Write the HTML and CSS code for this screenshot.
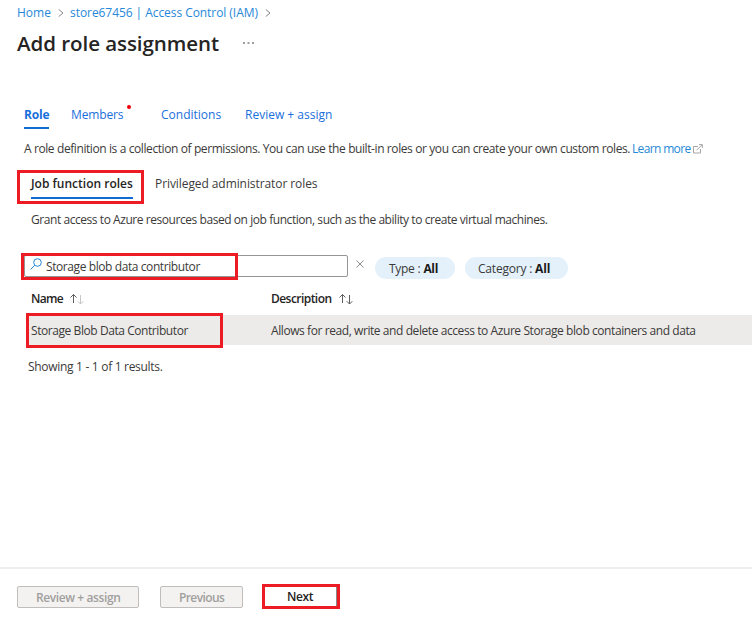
FILE: index.html
```html
<!DOCTYPE html>
<html lang="en">
<head>
<meta charset="utf-8">
<title>Add role assignment</title>
<link rel="stylesheet" href="styles.css">
</head>
<body>
<div class="page">
  <nav class="breadcrumb">
    <a class="crumb-home">Home</a>
    <svg class="chevron" viewBox="0 0 6 8"><path d="M.7.4 5 4 .7 7.6"/></svg>
    <a class="crumb-store">store67456 | Access Control (IAM)</a>
    <svg class="chevron" viewBox="0 0 6 8"><path d="M.7.4 5 4 .7 7.6"/></svg>
  </nav>
  <header class="title-row">
    <h1>Add role assignment</h1>
    <svg class="more" viewBox="0 0 11 2"><path d="M0 0h2v2H0zM4.5 0h2v2h-2zM9 0h2v2H9z"/></svg>
  </header>
  <nav class="tabs">
    <a class="tab tab-role active">Role</a>
    <a class="tab tab-members">Members<i class="dot"></i></a>
    <a class="tab tab-conditions">Conditions</a>
    <a class="tab tab-review">Review + assign</a>
  </nav>
  <p class="intro"><span class="intro-text">A role definition is a collection of permissions. You can use the built-in roles or you can create your own custom roles.</span><a class="learn">Learn more</a><svg class="external" viewBox="0 0 10 10"><path d="M5 2.500H.5v6.500H7.500V5M3.500 6.300 9 .8M6 .6h3.300V4"/></svg></p>
  <div class="subtabs">
    <div class="subtab-cell"><a class="subtab selected">Job function roles</a></div>
    <a class="subtab privileged">Privileged administrator roles</a>
  </div>
  <p class="grant"><span>Grant access to Azure resources based on job function, such as the ability to create virtual machines.</span></p>
  <div class="filters">
    <div class="search">
      <svg class="lens" viewBox="0 0 12 12"><circle cx="7.500" cy="4.500" r="3.800"/><path d="M4.800 7.200.6 11.400"/></svg>
      <span class="search-text">Storage blob data contributor</span>
      <i class="search-mark"></i>
    </div>
    <svg class="clear" viewBox="0 0 8 8"><path d="M.5.5l7 7M7.500.5l-7 7"/></svg>
    <div class="pill type"><span>Type : <b>All</b></span></div>
    <div class="pill category"><span>Category : <b>All</b></span></div>
  </div>
  <div class="table">
    <div class="thead">
      <div class="col-name"><b class="th-name">Name</b><svg class="sort" viewBox="0 0 16 12"><path d="M4.500 10V1.500M1.500 4.500l3-3 3 3"/><path class="faint" d="M11.500 2v9M8.700 8.200l2.800 2.800 2.800-2.800"/></svg></div>
      <div class="col-desc"><b class="th-desc">Description</b><svg class="sort" viewBox="0 0 16 12"><path d="M4.500 10V1.500M1.500 4.500l3-3 3 3"/><path d="M11.500 2v9M8.700 8.200l2.800 2.800 2.800-2.800"/></svg></div>
    </div>
    <div class="trow">
      <div class="col-name"><span class="td-name">Storage Blob Data Contributor</span><i class="row-mark"></i></div>
      <div class="col-desc"><span class="td-desc">Allows for read, write and delete access to Azure Storage blob containers and data</span></div>
    </div>
  </div>
  <p class="results"><span>Showing 1 - 1 of 1 results.</span></p>
  <footer class="footer">
    <div class="btn review"><span>Review + assign</span></div>
    <div class="btn previous"><span>Previous</span></div>
    <div class="next"><span>Next</span></div>
  </footer>
</div>
</body>
</html>
```
FILE: styles.css
```css
* { box-sizing: border-box; }
body { margin: 0; background: #fff; color: #3b3a39; font-family: "Open Sans", "Noto Sans", sans-serif; font-size: 12px; line-height: 18px; }
h1, p { margin: 0; }
a { color: #2688d8; }
svg { fill: none; stroke: #8a8886; flex: none; }
.page { width: 752px; height: 619px; display: flex; flex-direction: column; overflow: hidden; white-space: nowrap; }

.breadcrumb { height: 26px; padding-left: 17px; display: flex; align-items: center; }
.crumb-home { width: 41px; }
.crumb-store { width: 187px; margin-left: 6px; letter-spacing: -.06px; }
.chevron { width: 6px; height: 8px; }
.crumb-store + .chevron { margin-left: 8px; }

.title-row { height: 34px; padding-left: 17px; display: flex; align-items: center; }
h1 { width: 226px; font-size: 20.5px; line-height: 30px; font-weight: 600; letter-spacing: -.05px; color: #252423; }
.more { width: 11px; height: 2px; fill: #a19f9d; stroke: none; }

.tabs { height: 80px; padding: 45px 0 0 24px; display: flex; }
.tab { height: 24px; color: #1a6fdc; line-height: 19px; }
.tab-role { width: 25px; margin-right: 22px; font-weight: 700; letter-spacing: -.2px; border-bottom: 2px solid #0f6cd0; }
.tab-members { width: 90px; position: relative; letter-spacing: -.15px; }
.tab-conditions { width: 84px; }
.dot { position: absolute; left: 56px; top: 0; width: 4px; height: 4px; border-radius: 50%; background: #f00008; }

.intro { height: 30px; padding: 0 0 12px 24px; display: flex; align-items: center; }
.intro-text { width: 608px; letter-spacing: -.42px; word-spacing: .1px; }
.learn { width: 61px; letter-spacing: -.65px; }
.external { width: 10px; height: 10px; stroke: #a8a6a4; }

.subtabs { height: 34px; display: flex; padding-left: 17px; }
.subtab-cell { width: 127px; border: 3px solid #ed1c24; padding: 1px 0 0 11px; }
.subtab { color: #3b3a39; line-height: 20px; }
.selected { display: block; width: 102px; height: 25px; color: #252423; font-weight: 600; border-bottom: 2px solid #0f6cd0; }
.privileged { padding: 4px 0 0 11px; letter-spacing: -.08px; }
.grant { height: 51px; padding: 7px 0 0 31px; letter-spacing: -.44px; }

.filters { height: 27px; padding: 0 0 0 24px; display: flex; align-items: flex-start; margin-top: -2px; }
.search { position: relative; width: 324px; height: 22px; margin-top: 2px; border: 1px solid #979593; border-radius: 2px; display: flex; align-items: center; padding-left: 5px; }
.lens { width: 12px; height: 12px; stroke: #2688d8; margin-bottom: 4px; }
.search-text { margin-left: 4px; padding-top: 2px; letter-spacing: -.41px; }
.search-mark { position: absolute; left: -4px; top: -3px; width: 217px; height: 27px; border: 3px solid #ed1c24; }
.clear { width: 8px; height: 8px; margin: 7px 11px 0 8px; }
.pill { height: 22px; margin-top: 4px; border-radius: 11px; background: #e4f1fb; line-height: 23px; }
.pill b { color: #1b1a19; }
.type { width: 80px; padding-left: 14px; letter-spacing: -.3px; word-spacing: .2px; }
.category { width: 103px; margin-left: 10px; padding-left: 13px; letter-spacing: -.2px; }

.thead { height: 35px; display: flex; align-items: center; padding: 2px 0 0 31px; color: #252423; }
.thead b { font-weight: 600; }
.thead > div { display: flex; align-items: center; }
.th-name { width: 38px; letter-spacing: -.7px; }
.th-desc { width: 67px; letter-spacing: -.55px; }
.sort { width: 16px; height: 12px; stroke: #605e5c; }
.faint { stroke: #c8c6c4; }
.col-name { width: 240px; }
.trow { position: relative; height: 30px; margin-left: 26px; padding: 1px 0 0 5px; background: #edebe9; display: flex; align-items: center; }
.td-name { letter-spacing: -.43px; }
.td-desc { letter-spacing: -.42px; }
.row-mark { position: absolute; left: 0; top: -2px; width: 197px; height: 35px; border: 3px solid #ed1c24; }

.results { height: 222px; padding: 13px 0 0 28px; letter-spacing: -.3px; }
.footer { height: 52px; padding: 17px 0 0 17px; border-top: 2px solid #f0efee; display: flex; }
.btn { height: 22px; border: 1px solid #c0bebc; border-radius: 2px; background: #f3f2f1; color: #a19f9d; font-weight: 600; line-height: 21px; }
.review { width: 122px; padding-left: 18px; letter-spacing: -.4px; }
.previous { width: 83px; margin-left: 21px; padding-left: 18px; letter-spacing: -.6px; }
.next { width: 78px; height: 25px; margin: -2px 0 0 19px; padding-left: 22px; border: 3px solid #ed1c24; color: #252423; font-weight: 600; line-height: 20px; letter-spacing: -.4px; box-shadow: inset -1px 0 #8a8886; }
```
